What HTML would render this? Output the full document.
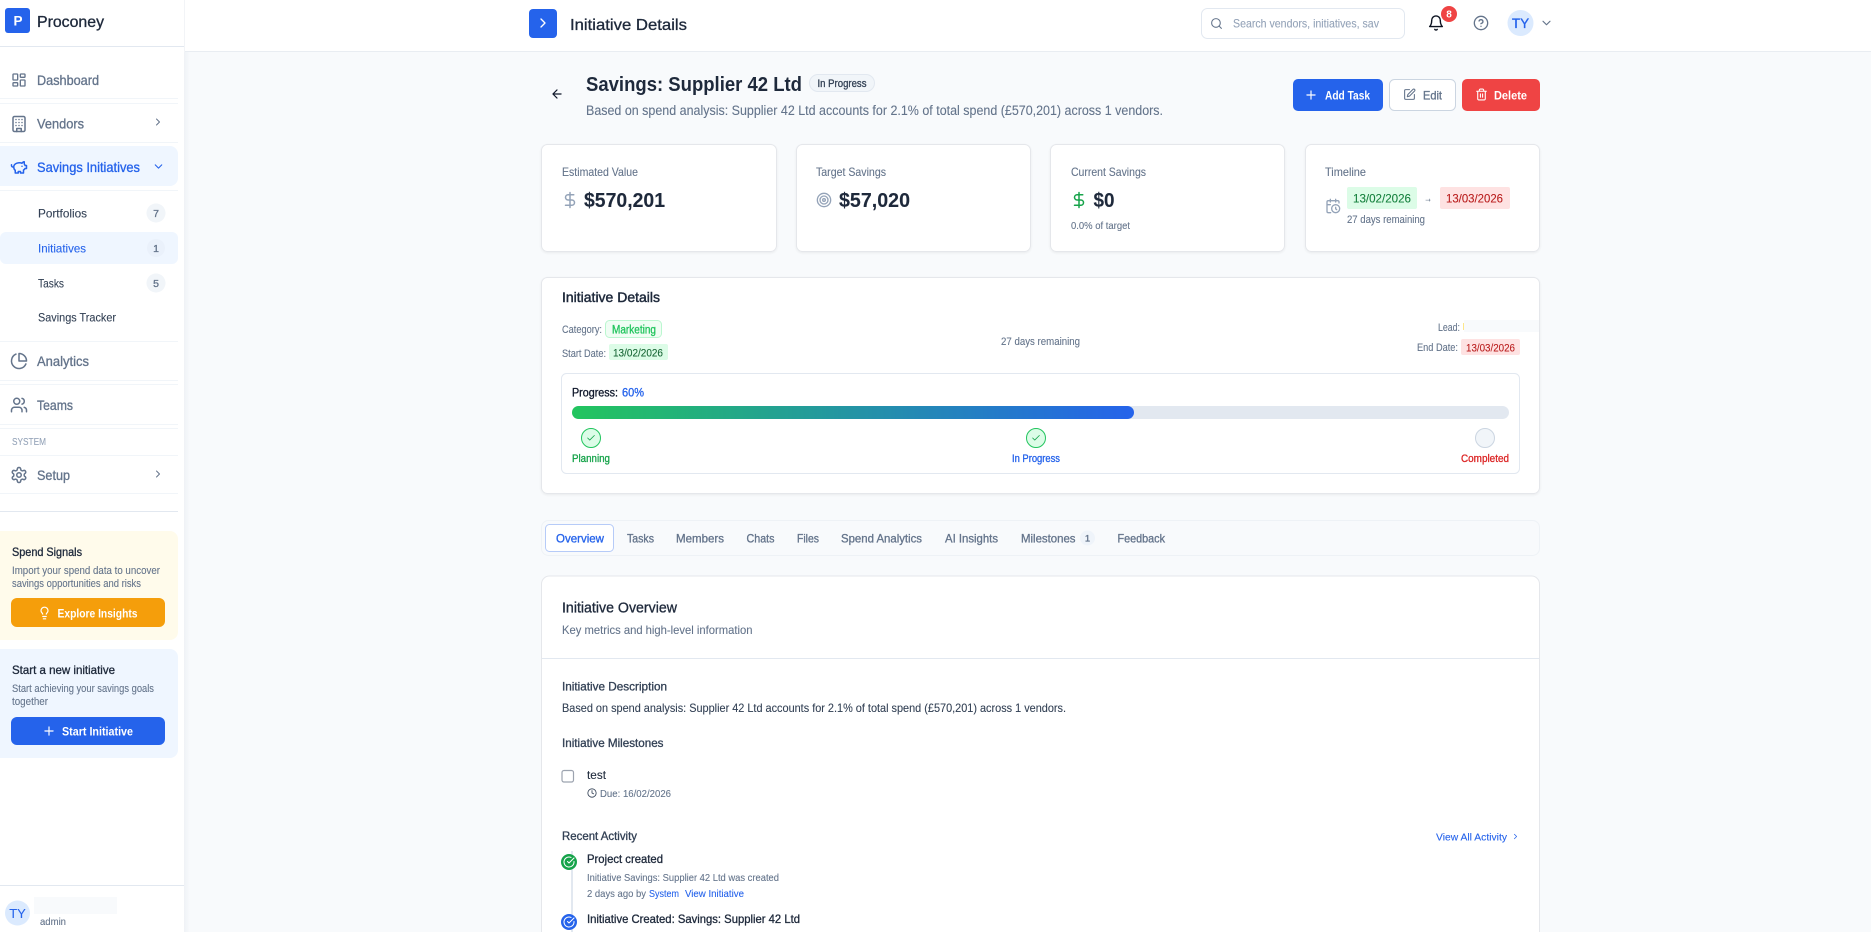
<!DOCTYPE html>
<html lang="en"><head><meta charset="utf-8"><title>Initiative Details</title>
<style>
html,body{margin:0;padding:0;width:1871px;height:932px;overflow:hidden;background:#f8fafc}
svg{display:block}
text{font-family:"Liberation Sans",Arial,sans-serif;fill:currentColor;white-space:pre;stroke:currentColor;stroke-width:.1}
.m{stroke:currentColor;stroke-width:.32}
.b{font-weight:700;stroke-width:0}
.i{fill:none;stroke:currentColor;stroke-width:2;stroke-linecap:round;stroke-linejoin:round;overflow:visible}
.a{color:#64748b}.d{color:#1e293b}.s{color:#334155}.l{color:#2563eb}.w{color:#fff}.p{color:#94a3b8}
</style></head><body>
<svg width="1871" height="932" viewBox="0 0 1871 932" xmlns="http://www.w3.org/2000/svg">
<defs>
<linearGradient id="g"><stop offset="0" stop-color="#22c55e"/><stop offset="1" stop-color="#2563eb"/></linearGradient>
<linearGradient id="e"><stop offset="0" stop-color="#eff2f6"/><stop offset="1" stop-color="#f8fafc"/></linearGradient>
<filter id="sh" x="-5%" y="-5%" width="110%" height="110%"><feDropShadow dx="0" dy="1" stdDeviation="1" flood-color="#000" flood-opacity=".06"/></filter>
<symbol id="chev" viewBox="0 0 24 24"><path d="m9 18 6-6-6-6"/></symbol>
<symbol id="chk" viewBox="0 0 24 24"><path d="M20 6 9 17l-5-5"/></symbol>
<symbol id="plus" viewBox="0 0 24 24"><path d="M5 12h14M12 5v14"/></symbol>
<symbol id="dollar" viewBox="0 0 24 24"><path d="M12 2v20M17 5H9.500a3.500 3.500 0 0 0 0 7h5a3.500 3.500 0 0 1 0 7H6"/></symbol>
<symbol id="cc" viewBox="0 0 24 24"><path d="M22 11.080V12a10 10 0 1 1-5.930-9.140M22 4 12 14.010l-3-3"/></symbol>
</defs>

<!-- page -->
<rect width="1871" height="932" fill="#f8fafc"/>

<!-- top bar -->
<rect x="184" width="1687" height="51" fill="#fff"/>
<rect x="184" y="51" width="1687" height="1" fill="#e9edf2"/>
<rect x="529" y="9" width="28" height="29" rx="4" fill="#2563eb"/>
<svg x="535" y="15" width="16" height="16" class="i w"><use href="#chev"/></svg>
<text x="570" y="30" font-size="16" textLength="117" lengthAdjust="spacingAndGlyphs" class="m d">Initiative Details</text>
<rect x="1201.500" y="8.500" width="203" height="30" rx="6" fill="#fff" stroke="#e2e8f0"/>
<svg x="1210" y="17" width="13" height="13" viewBox="0 0 24 24" class="i a"><circle cx="11" cy="11" r="8"/><path d="m21 21-4.300-4.300"/></svg>
<text x="1233" y="27.500" font-size="12" textLength="146" lengthAdjust="spacingAndGlyphs" class="p">Search vendors, initiatives, sav</text>
<svg x="1427.500" y="14.500" width="17" height="17" viewBox="0 0 24 24" class="i" color="#0b1220"><path d="M6 8a6 6 0 0 1 12 0c0 7 3 9 3 9H3s3-2 3-9M10.300 21a1.940 1.940 0 0 0 3.400 0"/></svg>
<circle cx="1449" cy="14" r="8" fill="#ef4444"/>
<text x="1449" y="17.500" font-size="10" text-anchor="middle" class="b w">8</text>
<svg x="1473" y="15" width="16" height="16" viewBox="0 0 24 24" class="i a"><circle cx="12" cy="12" r="10"/><path d="M9.090 9a3 3 0 0 1 5.830 1c0 2-3 3-3 3M12 17h.01"/></svg>
<circle cx="1520.500" cy="23" r="13" fill="#dbeafe"/>
<text x="1520.500" y="28" font-size="13.500" text-anchor="middle" class="m l">TY</text>
<svg x="1539.500" y="16" width="14" height="14" viewBox="0 0 24 24" class="i a"><path d="m6 9 6 6 6-6"/></svg>

<!-- sidebar -->
<rect x="184" y="52" width="6" height="880" fill="url(#e)"/>
<rect width="184" height="932" fill="#fff"/>
<rect x="184" y="0" width="1" height="52" fill="#f2f4f7"/>
<rect y="46" width="184" height="1" fill="#e2e8f0"/>
<rect x="5" y="8" width="25" height="25" rx="3" fill="#2563eb"/>
<text x="18" y="25.500" font-size="13.500" text-anchor="middle" class="b w">P</text>
<text x="37" y="27" font-size="16" textLength="67" lengthAdjust="spacingAndGlyphs" class="m d">Proconey</text>

<g fill="#f1f5f9">
<rect y="98" width="178" height="1"/><rect y="103" width="178" height="1"/><rect y="142" width="178" height="1"/><rect y="190" width="178" height="1"/><rect y="341" width="178" height="1"/><rect y="380" width="178" height="1"/><rect y="384" width="178" height="1"/><rect y="424" width="178" height="1"/><rect y="428" width="178" height="1"/><rect y="455" width="178" height="1"/><rect y="493" width="178" height="1"/>
</g>
<rect x="-8" y="146" width="186" height="40" rx="8" fill="#eff6ff"/>
<rect x="0" y="232" width="178" height="32" rx="6" fill="#eff6ff"/>

<g class="i a">
<svg x="11" y="72" width="16" height="16" viewBox="0 0 24 24"><rect x="3" y="3" width="7" height="9" rx="1"/><rect x="14" y="3" width="7" height="5" rx="1"/><rect x="14" y="12" width="7" height="9" rx="1"/><rect x="3" y="16" width="7" height="5" rx="1"/></svg>
<svg x="10" y="115" width="18" height="18" viewBox="0 0 24 24"><rect x="4" y="2" width="16" height="20" rx="2"/><path d="M9 22v-4h6v4M8 6h.01M16 6h.01M12 6h.01M12 10h.01M12 14h.01M16 10h.01M16 14h.01M8 10h.01M8 14h.01"/></svg>
<svg x="10" y="352" width="18" height="18" viewBox="0 0 24 24"><path d="M21.210 15.890A10 10 0 1 1 8 2.830M22 12A10 10 0 0 0 12 2v10z"/></svg>
<svg x="10" y="396" width="18" height="18" viewBox="0 0 24 24"><path d="M16 21v-2a4 4 0 0 0-4-4H6a4 4 0 0 0-4 4v2"/><circle cx="9" cy="7" r="4"/><path d="M22 21v-2a4 4 0 0 0-3-3.870M16 3.130a4 4 0 0 1 0 7.750"/></svg>
<svg x="10" y="466" width="18" height="18" viewBox="0 0 24 24"><path d="M12.220 2h-.44a2 2 0 0 0-2 2v.18a2 2 0 0 1-1 1.730l-.43.25a2 2 0 0 1-2 0l-.15-.08a2 2 0 0 0-2.730.73l-.22.38a2 2 0 0 0 .73 2.730l.15.1a2 2 0 0 1 1 1.720v.51a2 2 0 0 1-1 1.740l-.15.09a2 2 0 0 0-.73 2.730l.22.38a2 2 0 0 0 2.730.73l.15-.08a2 2 0 0 1 2 0l.43.25a2 2 0 0 1 1 1.730V20a2 2 0 0 0 2 2h.44a2 2 0 0 0 2-2v-.18a2 2 0 0 1 1-1.730l.43-.25a2 2 0 0 1 2 0l.15.08a2 2 0 0 0 2.730-.73l.22-.39a2 2 0 0 0-.73-2.730l-.15-.08a2 2 0 0 1-1-1.740v-.5a2 2 0 0 1 1-1.740l.15-.09a2 2 0 0 0 .73-2.730l-.22-.38a2 2 0 0 0-2.730-.73l-.15.08a2 2 0 0 1-2 0l-.43-.25a2 2 0 0 1-1-1.730V4a2 2 0 0 0-2-2z"/><circle cx="12" cy="12" r="3"/></svg>
<svg x="152" y="116" width="12" height="12"><use href="#chev"/></svg>
<svg x="152" y="468" width="12" height="12"><use href="#chev"/></svg>
</g>
<svg x="10" y="158" width="18" height="18" viewBox="0 0 24 24" class="i l"><path d="M19 5c-1.500 0-2.800 1.400-3 2-3.500-1.500-11-.3-11 5 0 1.800 0 3 2 4.500V20h4v-2h3v2h4v-4c1-.5 1.700-1 2-2h2v-4h-2c0-1-.5-1.500-1-2V5zM2 9v1c0 1.100.9 2 2 2h1M16 11h.01"/></svg>
<svg x="152" y="160" width="13" height="13" viewBox="0 0 24 24" class="i l"><path d="m6 9 6 6 6-6"/></svg>

<g font-size="14">
<text x="37" y="85" textLength="62" lengthAdjust="spacingAndGlyphs" class="m a">Dashboard</text>
<text x="37" y="128.500" textLength="47" lengthAdjust="spacingAndGlyphs" class="m a">Vendors</text>
<text x="37" y="172" textLength="103" lengthAdjust="spacingAndGlyphs" class="m l">Savings Initiatives</text>
<text x="37" y="366" textLength="52" lengthAdjust="spacingAndGlyphs" class="m a">Analytics</text>
<text x="37" y="410" textLength="36" lengthAdjust="spacingAndGlyphs" class="m a">Teams</text>
<text x="37" y="480" textLength="33" lengthAdjust="spacingAndGlyphs" class="m a">Setup</text>
</g>
<g font-size="12">
<text x="38" y="217.500" textLength="49" lengthAdjust="spacingAndGlyphs" class="s">Portfolios</text>
<text x="38" y="252.500" textLength="48" lengthAdjust="spacingAndGlyphs" class="l">Initiatives</text>
<text x="38" y="287.500" textLength="26" lengthAdjust="spacingAndGlyphs" class="s">Tasks</text>
<text x="38" y="321.500" textLength="78" lengthAdjust="spacingAndGlyphs" class="s">Savings Tracker</text>
</g>
<circle cx="156" cy="213" r="9.500" fill="#f1f5f9"/>
<circle cx="156" cy="248" r="9" fill="#eaf1fb"/>
<circle cx="156" cy="283" r="9.500" fill="#f1f5f9"/>
<g font-size="10.500" text-anchor="middle" class="a">
<text x="156" y="217" class="m">7</text><text x="156" y="252" class="m">1</text><text x="156" y="287" class="m">5</text>
</g>
<text x="12" y="445" font-size="10" textLength="34" lengthAdjust="spacingAndGlyphs" class="p">SYSTEM</text>
<rect y="511" width="178" height="1" fill="#e2e8f0"/>

<rect x="-8" y="531" width="186" height="109" rx="8" fill="#fffbeb"/>
<text x="12" y="556" font-size="12" textLength="70" lengthAdjust="spacingAndGlyphs" class="m d">Spend Signals</text>
<text x="12" y="574" font-size="11" textLength="148" lengthAdjust="spacingAndGlyphs" class="a">Import your spend data to uncover</text>
<text x="12" y="587" font-size="11" textLength="129" lengthAdjust="spacingAndGlyphs" class="a">savings opportunities and risks</text>
<rect x="11" y="598" width="154" height="29" rx="6" fill="#f59e0b"/>
<svg x="37" y="606" width="15" height="14" viewBox="0 0 24 24" class="i w"><path d="M15 14c.2-1 .7-1.700 1.500-2.500 1-.9 1.500-2.200 1.500-3.500A6 6 0 0 0 6 8c0 1 .2 2.200 1.500 3.500.7.7 1.300 1.500 1.500 2.500M9 18h6M10 22h4"/></svg>
<text x="57.500" y="617.500" font-size="12" textLength="80" lengthAdjust="spacingAndGlyphs" class="b w">Explore Insights</text>

<rect x="-8" y="649" width="186" height="109" rx="8" fill="#eff6ff"/>
<text x="12" y="674" font-size="12" textLength="103" lengthAdjust="spacingAndGlyphs" class="m d">Start a new initiative</text>
<text x="12" y="692" font-size="11" textLength="142" lengthAdjust="spacingAndGlyphs" class="a">Start achieving your savings goals</text>
<text x="12" y="705" font-size="11" textLength="36" lengthAdjust="spacingAndGlyphs" class="a">together</text>
<rect x="11" y="717" width="154" height="28" rx="6" fill="#2563eb"/>
<svg x="42" y="724" width="14" height="14" class="i w"><use href="#plus"/></svg>
<text x="62" y="735.500" font-size="12" textLength="71" lengthAdjust="spacingAndGlyphs" class="b w">Start Initiative</text>

<rect y="885" width="184" height="1" fill="#e2e8f0"/>
<circle cx="17.500" cy="913" r="12.500" fill="#dbeafe"/>
<text x="17.500" y="918" font-size="13" text-anchor="middle" class="l">TY</text>
<rect x="34" y="897" width="83" height="17" fill="#f8fafc"/>
<text x="40" y="925" font-size="10.500" textLength="26" lengthAdjust="spacingAndGlyphs" class="a">admin</text>

<!-- page head -->
<svg x="550" y="87" width="14" height="14" viewBox="0 0 24 24" class="i" color="#0f172a"><path d="m12 19-7-7 7-7M19 12H5"/></svg>
<text x="586" y="91" font-size="20" textLength="216" lengthAdjust="spacingAndGlyphs" class="b d">Savings: Supplier 42 Ltd</text>
<rect x="809.500" y="74.500" width="65" height="17" rx="8.500" fill="#f1f5f9" stroke="#e2e8f0"/>
<text x="817.500" y="87" font-size="11" textLength="49" lengthAdjust="spacingAndGlyphs" class="m s">In Progress</text>
<text x="586" y="115" font-size="13.500" textLength="577" lengthAdjust="spacingAndGlyphs" class="a">Based on spend analysis: Supplier 42 Ltd accounts for 2.1% of total spend (£570,201) across 1 vendors.</text>

<rect x="1293" y="79" width="90" height="32" rx="5" fill="#2563eb"/>
<svg x="1304" y="88" width="14" height="14" class="i w"><use href="#plus"/></svg>
<text x="1325" y="99.500" font-size="12" textLength="45" lengthAdjust="spacingAndGlyphs" class="b w">Add Task</text>
<rect x="1389.500" y="79.500" width="66" height="31" rx="5" fill="#fff" stroke="#cbd5e1"/>
<svg x="1403" y="88" width="13" height="13" viewBox="0 0 24 24" class="i a"><path d="M12 3H5a2 2 0 0 0-2 2v14a2 2 0 0 0 2 2h14a2 2 0 0 0 2-2v-7M18.375 2.625a2.121 2.121 0 1 1 3 3L12 15l-4 1 1-4Z"/></svg>
<text x="1423" y="99.500" font-size="12" textLength="19" lengthAdjust="spacingAndGlyphs" class="m a">Edit</text>
<rect x="1462" y="79" width="78" height="32" rx="5" fill="#ef4444"/>
<svg x="1475" y="88" width="13" height="13" viewBox="0 0 24 24" class="i w"><path d="M3 6h18M19 6v14c0 1-1 2-2 2H7c-1 0-2-1-2-2V6M8 6V4c0-1 1-2 2-2h4c1 0 2 1 2 2v2M10 11v6M14 11v6"/></svg>
<text x="1494" y="99.500" font-size="12" textLength="33" lengthAdjust="spacingAndGlyphs" class="b w">Delete</text>

<!-- stat cards -->
<g fill="#fff" stroke="#e5e7eb" filter="url(#sh)">
<rect x="541.500" y="144.500" width="235" height="107" rx="6"/>
<rect x="796.500" y="144.500" width="234" height="107" rx="6"/>
<rect x="1050.500" y="144.500" width="234" height="107" rx="6"/>
<rect x="1305.500" y="144.500" width="234" height="107" rx="6"/>
</g>
<g font-size="12" class="a">
<text x="562" y="176" textLength="76" lengthAdjust="spacingAndGlyphs">Estimated Value</text>
<text x="816" y="176" textLength="70" lengthAdjust="spacingAndGlyphs">Target Savings</text>
<text x="1071" y="176" textLength="75" lengthAdjust="spacingAndGlyphs">Current Savings</text>
<text x="1325" y="176" textLength="41" lengthAdjust="spacingAndGlyphs">Timeline</text>
</g>
<svg x="561" y="191" width="18" height="18" class="i p"><use href="#dollar"/></svg>
<svg x="816" y="192" width="16" height="16" viewBox="0 0 24 24" class="i p"><circle cx="12" cy="12" r="10"/><circle cx="12" cy="12" r="6"/><circle cx="12" cy="12" r="2"/></svg>
<svg x="1070" y="191" width="18" height="18" class="i" color="#16a34a"><use href="#dollar"/></svg>
<g font-size="20" class="b d">
<text x="584" y="207" textLength="81" lengthAdjust="spacingAndGlyphs">$570,201</text>
<text x="839" y="207" textLength="71" lengthAdjust="spacingAndGlyphs">$57,020</text>
<text x="1093.500" y="207" textLength="21" lengthAdjust="spacingAndGlyphs">$0</text>
</g>
<text x="1071" y="229" font-size="10.500" textLength="59" lengthAdjust="spacingAndGlyphs" class="a">0.0% of target</text>
<svg x="1325" y="198" width="16" height="16" viewBox="0 0 24 24" class="i p"><path d="M21 7.500V6a2 2 0 0 0-2-2H5a2 2 0 0 0-2 2v14a2 2 0 0 0 2 2h3.500M16 2v4M8 2v4M3 10h5M17.500 17.500 16 16.300V14"/><circle cx="16" cy="16" r="6"/></svg>
<rect x="1347" y="187" width="70" height="22" rx="2" fill="#dcfce7"/>
<text x="1353" y="202.500" font-size="12" textLength="58" lengthAdjust="spacingAndGlyphs" color="#15803d">13/02/2026</text>
<text x="1424" y="202" font-size="12" textLength="8" lengthAdjust="spacingAndGlyphs" class="a">→</text>
<rect x="1440" y="187" width="70" height="22" rx="2" fill="#fee2e2"/>
<text x="1446" y="202.500" font-size="12" textLength="57" lengthAdjust="spacingAndGlyphs" color="#b91c1c">13/03/2026</text>
<text x="1347" y="223" font-size="11" textLength="78" lengthAdjust="spacingAndGlyphs" class="a">27 days remaining</text>

<!-- details panel -->
<rect x="541.500" y="277.500" width="998" height="216" rx="6" fill="#fff" stroke="#e5e7eb" filter="url(#sh)"/>
<text x="562" y="302" font-size="14" textLength="98" lengthAdjust="spacingAndGlyphs" class="m d" style="stroke-width:.45">Initiative Details</text>
<text x="562" y="333" font-size="11" textLength="40" lengthAdjust="spacingAndGlyphs" class="a">Category:</text>
<rect x="605.500" y="320.500" width="56" height="17" rx="4" fill="#f0fdf4" stroke="#bbf7d0"/>
<text x="612" y="333.500" font-size="11.500" textLength="44" lengthAdjust="spacingAndGlyphs" class="m" color="#22c55e">Marketing</text>
<text x="562" y="357" font-size="11" textLength="44" lengthAdjust="spacingAndGlyphs" class="a">Start Date:</text>
<rect x="609" y="344" width="59" height="16" rx="2" fill="#dcfce7"/>
<text x="613" y="356.500" font-size="11" textLength="50" lengthAdjust="spacingAndGlyphs" color="#166534">13/02/2026</text>
<text x="1001" y="345" font-size="11" textLength="79" lengthAdjust="spacingAndGlyphs" class="a">27 days remaining</text>
<text x="1438" y="331" font-size="11" textLength="22" lengthAdjust="spacingAndGlyphs" class="a">Lead:</text>
<rect x="1464" y="320" width="75" height="12" fill="#f8fafc"/>
<rect x="1463" y="323" width="1" height="7" fill="#fde68a"/>
<text x="1417" y="351" font-size="11" textLength="41" lengthAdjust="spacingAndGlyphs" class="a">End Date:</text>
<rect x="1461" y="339" width="59" height="16" rx="2" fill="#fee2e2"/>
<text x="1466" y="351.500" font-size="11" textLength="49" lengthAdjust="spacingAndGlyphs" color="#b91c1c">13/03/2026</text>

<rect x="561.500" y="373.500" width="958" height="100" rx="5" fill="#fff" stroke="#e2e8f0"/>
<text x="572" y="396.500" font-size="12" textLength="46" lengthAdjust="spacingAndGlyphs" class="m" color="#0f172a">Progress:</text>
<text x="622" y="396.500" font-size="12" textLength="22" lengthAdjust="spacingAndGlyphs" class="m l">60%</text>
<rect x="572" y="406" width="937" height="13" rx="6.500" fill="#e2e8f0"/>
<rect x="572" y="406" width="562" height="13" rx="6.500" fill="url(#g)"/>
<circle cx="591" cy="438" r="9.500" fill="#dcfce7" stroke="#22c55e"/>
<svg x="586" y="433" width="10" height="10" class="i" color="#16a34a"><use href="#chk"/></svg>
<circle cx="1036" cy="438" r="9.500" fill="#dcfce7" stroke="#22c55e"/>
<svg x="1031" y="433" width="10" height="10" class="i" color="#16a34a"><use href="#chk"/></svg>
<circle cx="1485" cy="438" r="9.500" fill="#f1f5f9" stroke="#cbd5e1"/>
<g font-size="11">
<text x="572" y="462" textLength="38" lengthAdjust="spacingAndGlyphs" class="m" color="#16a34a">Planning</text>
<text x="1012" y="462" textLength="48" lengthAdjust="spacingAndGlyphs" class="m l">In Progress</text>
<text x="1461" y="462" textLength="48" lengthAdjust="spacingAndGlyphs" class="m" color="#dc2626">Completed</text>
</g>

<!-- tabs -->
<rect x="541.500" y="520.500" width="998" height="35" rx="7" fill="#f8fafc" stroke="#eef2f6"/>
<rect x="545.500" y="524.500" width="68" height="27" rx="4" fill="#fff" stroke="#b6cbf8"/>
<g font-size="12" class="a">
<text x="556" y="542.500" textLength="48" lengthAdjust="spacingAndGlyphs" class="m l">Overview</text>
<text x="627" y="542.500" textLength="27" lengthAdjust="spacingAndGlyphs" class="m">Tasks</text>
<text x="676" y="542.500" textLength="48" lengthAdjust="spacingAndGlyphs" class="m">Members</text>
<text x="746.500" y="542.500" textLength="28" lengthAdjust="spacingAndGlyphs" class="m">Chats</text>
<text x="797" y="542.500" textLength="22" lengthAdjust="spacingAndGlyphs" class="m">Files</text>
<text x="841" y="542.500" textLength="81" lengthAdjust="spacingAndGlyphs" class="m">Spend Analytics</text>
<text x="945" y="542.500" textLength="53" lengthAdjust="spacingAndGlyphs" class="m">AI Insights</text>
<text x="1021" y="542.500" textLength="54.500" lengthAdjust="spacingAndGlyphs" class="m">Milestones</text>
<text x="1117.500" y="542.500" textLength="47.500" lengthAdjust="spacingAndGlyphs" class="m">Feedback</text>
</g>
<circle cx="1087.500" cy="538" r="7.500" fill="#eff4fa"/>
<text x="1087.500" y="541.500" font-size="9.500" text-anchor="middle" class="m a">1</text>

<!-- overview card -->
<path d="M541.500 940V584a8 8 0 0 1 8-8h982a8 8 0 0 1 8 8v356z" fill="#fff" stroke="#e5e7eb"/>
<text x="562" y="612.500" font-size="15" textLength="115" lengthAdjust="spacingAndGlyphs" class="m d">Initiative Overview</text>
<text x="562" y="634" font-size="12" textLength="190.500" lengthAdjust="spacingAndGlyphs" class="a">Key metrics and high-level information</text>
<rect x="542" y="658" width="997" height="1" fill="#e2e8f0"/>
<text x="562" y="690.500" font-size="12" textLength="105" lengthAdjust="spacingAndGlyphs" class="m s">Initiative Description</text>
<text x="562" y="712" font-size="12" textLength="504" lengthAdjust="spacingAndGlyphs" class="s">Based on spend analysis: Supplier 42 Ltd accounts for 2.1% of total spend (£570,201) across 1 vendors.</text>
<text x="562" y="747" font-size="12" textLength="101.500" lengthAdjust="spacingAndGlyphs" class="m s">Initiative Milestones</text>
<rect x="562" y="770.500" width="11.500" height="11.500" rx="2" fill="#fff" stroke="#9ca3af" stroke-width="1.200"/>
<text x="587" y="779" font-size="12" textLength="19" lengthAdjust="spacingAndGlyphs" class="d">test</text>
<svg x="587" y="788" width="10" height="10" viewBox="0 0 24 24" class="i s"><circle cx="12" cy="12" r="10"/><path d="M12 6v6l4 2"/></svg>
<text x="600" y="797" font-size="10.500" textLength="71" lengthAdjust="spacingAndGlyphs" class="a">Due: 16/02/2026</text>
<text x="562" y="840" font-size="12" textLength="75" lengthAdjust="spacingAndGlyphs" class="m s">Recent Activity</text>
<text x="1436" y="840.500" font-size="10.500" textLength="71" lengthAdjust="spacingAndGlyphs" class="l">View All Activity</text>
<svg x="1511" y="832" width="9" height="9" class="i l"><use href="#chev"/></svg>

<rect x="571" y="851" width="2" height="81" fill="#e2e8f0"/>
<circle cx="569" cy="862" r="8" fill="#16a34a"/>
<svg x="563" y="856" width="12" height="12" class="i w"><use href="#cc"/></svg>
<text x="587" y="863" font-size="12" textLength="76" lengthAdjust="spacingAndGlyphs" class="m d">Project created</text>
<text x="587" y="881" font-size="10.500" textLength="192" lengthAdjust="spacingAndGlyphs" class="a">Initiative Savings: Supplier 42 Ltd was created</text>
<text x="587" y="897" font-size="10.500" textLength="59" lengthAdjust="spacingAndGlyphs" class="a">2 days ago by</text>
<text x="649" y="897" font-size="10.500" textLength="30" lengthAdjust="spacingAndGlyphs" class="l">System</text>
<text x="685" y="897" font-size="10.500" textLength="59" lengthAdjust="spacingAndGlyphs" class="l">View Initiative</text>
<circle cx="569" cy="922" r="8" fill="#2563eb"/>
<svg x="563" y="916" width="12" height="12" class="i w"><use href="#cc"/></svg>
<text x="587" y="923" font-size="12" textLength="213" lengthAdjust="spacingAndGlyphs" class="m d">Initiative Created: Savings: Supplier 42 Ltd</text>
</svg>
</body></html>
